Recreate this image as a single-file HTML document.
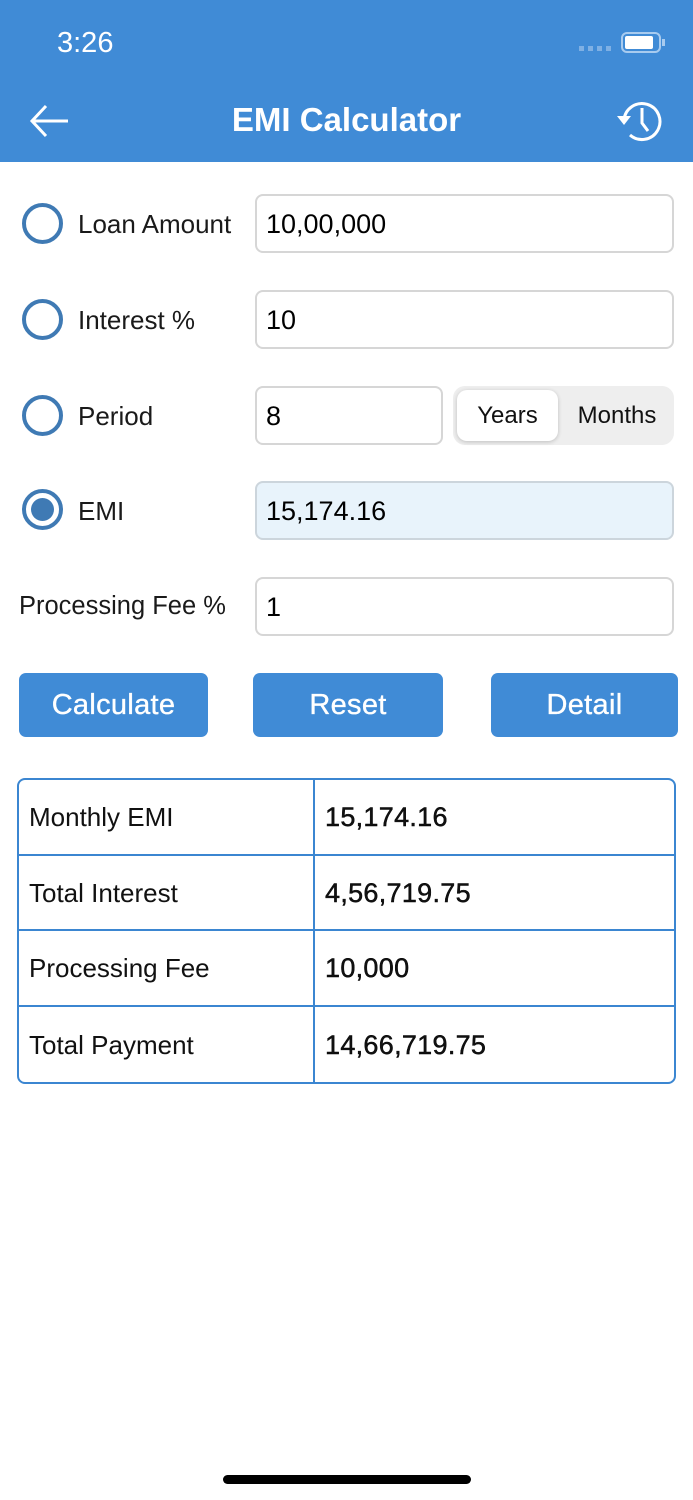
<!DOCTYPE html>
<html><head><style>
*{margin:0;padding:0;box-sizing:border-box}
body{width:693px;height:1500px;background:#fff;font-family:"Liberation Sans",sans-serif;position:relative;overflow:hidden;color:#111}
.hdr{position:absolute;left:0;top:0;width:693px;height:162px;background:#408bd6}
.a{position:absolute}
.lbl{position:absolute;font-size:26px;color:#1a1a1a}
.radio{position:absolute;left:22px;width:41px;height:41px;border:4px solid #3f7ab4;border-radius:50%}
.inp{position:absolute;border:2px solid #d6d6d6;border-radius:8px;font-size:27px;padding-left:9px;padding-top:2px;display:flex;align-items:center;color:#000}
.btn{position:absolute;top:673px;height:64px;background:#408bd6;color:#fff;border-radius:7px;font-size:29px;display:flex;align-items:center;justify-content:center;-webkit-text-stroke:0.35px #fff;letter-spacing:0.3px}
table{position:absolute;left:17px;top:778px;width:659px;border-collapse:separate;border-spacing:0;border:2px solid #3b86d1;border-radius:8px}
td{height:75.5px;font-size:26px;padding-left:10px;padding-top:2px;border-bottom:2px solid #3b86d1}
tr:last-child td{border-bottom:none}
td:first-child{width:296px;border-right:2px solid #3b86d1}
td:last-child{font-size:27px;-webkit-text-stroke:0.45px #000;letter-spacing:0.3px}
</style></head><body>
<div class="hdr"></div>
<div class="a" style="left:57px;top:27px;color:#fff;font-size:29px">3:26</div>
<div class="a" style="left:579px;top:46px;width:32px;height:5px;background:repeating-linear-gradient(90deg,#7fb0e4 0 5px,transparent 5px 9px)"></div>
<div class="a" style="left:621px;top:32px;width:40px;height:21px;border:2px solid #a8cbef;border-radius:6px"><div style="margin:2px;width:28px;height:13px;background:#fff;border-radius:2px"></div></div>
<div class="a" style="left:662px;top:39px;width:3px;height:7px;background:#a8cbef"></div>
<svg class="a" style="left:28px;top:103px" width="44" height="36" viewBox="0 0 44 36"><path d="M40 18H4M18 3L4 18l14 15" stroke="#fff" stroke-width="3" fill="none"/></svg>
<div class="a" style="left:0;width:693px;top:101px;text-align:center;color:#fff;font-size:33px;font-weight:bold">EMI Calculator</div>
<svg class="a" style="left:614px;top:98px" width="52" height="46" viewBox="0 0 52 46"><path d="M10 22A18 18 0 1 1 16 37" stroke="#fff" stroke-width="3" fill="none"/><path d="M3 18l7 9 7-9z" fill="#fff"/><path d="M28 10v15l6 8" stroke="#fff" stroke-width="3" fill="none"/></svg>

<div class="radio" style="top:203px"></div><div class="lbl" style="left:78px;top:209px">Loan Amount</div>
<div class="inp" style="left:255px;top:194px;width:419px;height:59px">10,00,000</div>
<div class="radio" style="top:299px"></div><div class="lbl" style="left:78px;top:305px">Interest %</div>
<div class="inp" style="left:255px;top:290px;width:419px;height:59px">10</div>
<div class="radio" style="top:395px"></div><div class="lbl" style="left:78px;top:401px">Period</div>
<div class="inp" style="left:255px;top:386px;width:188px;height:59px">8</div>
<div class="a" style="left:453px;top:386px;width:221px;height:59px;background:#eeeeee;border-radius:12px"></div>
<div class="a" style="left:457px;top:390px;width:101px;height:51px;background:#fff;border-radius:10px;box-shadow:0 1px 4px rgba(0,0,0,.2);font-size:24px;display:flex;align-items:center;justify-content:center">Years</div>
<div class="a" style="left:560px;top:390px;width:114px;height:51px;font-size:24px;display:flex;align-items:center;justify-content:center">Months</div>
<div class="radio" style="top:489px;padding:5px"><div style="width:23px;height:23px;border-radius:50%;background:#3f7ab4"></div></div><div class="lbl" style="left:78px;top:496px">EMI</div>
<div class="inp" style="left:255px;top:481px;width:419px;height:59px;background:#e8f3fb;border-color:#ccd5dc">15,174.16</div>
<div class="lbl" style="left:19px;top:592px;font-size:25.5px">Processing Fee %</div>
<div class="inp" style="left:255px;top:577px;width:419px;height:59px">1</div>
<div class="btn" style="left:19px;width:189px">Calculate</div>
<div class="btn" style="left:253px;width:190px">Reset</div>
<div class="btn" style="left:491px;width:187px">Detail</div>
<table>
<tr><td>Monthly EMI</td><td>15,174.16</td></tr>
<tr><td>Total Interest</td><td>4,56,719.75</td></tr>
<tr><td>Processing Fee</td><td>10,000</td></tr>
<tr><td>Total Payment</td><td>14,66,719.75</td></tr>
</table>
<div class="a" style="left:223px;top:1475px;width:248px;height:9px;background:#000;border-radius:5px"></div>
</body></html>
